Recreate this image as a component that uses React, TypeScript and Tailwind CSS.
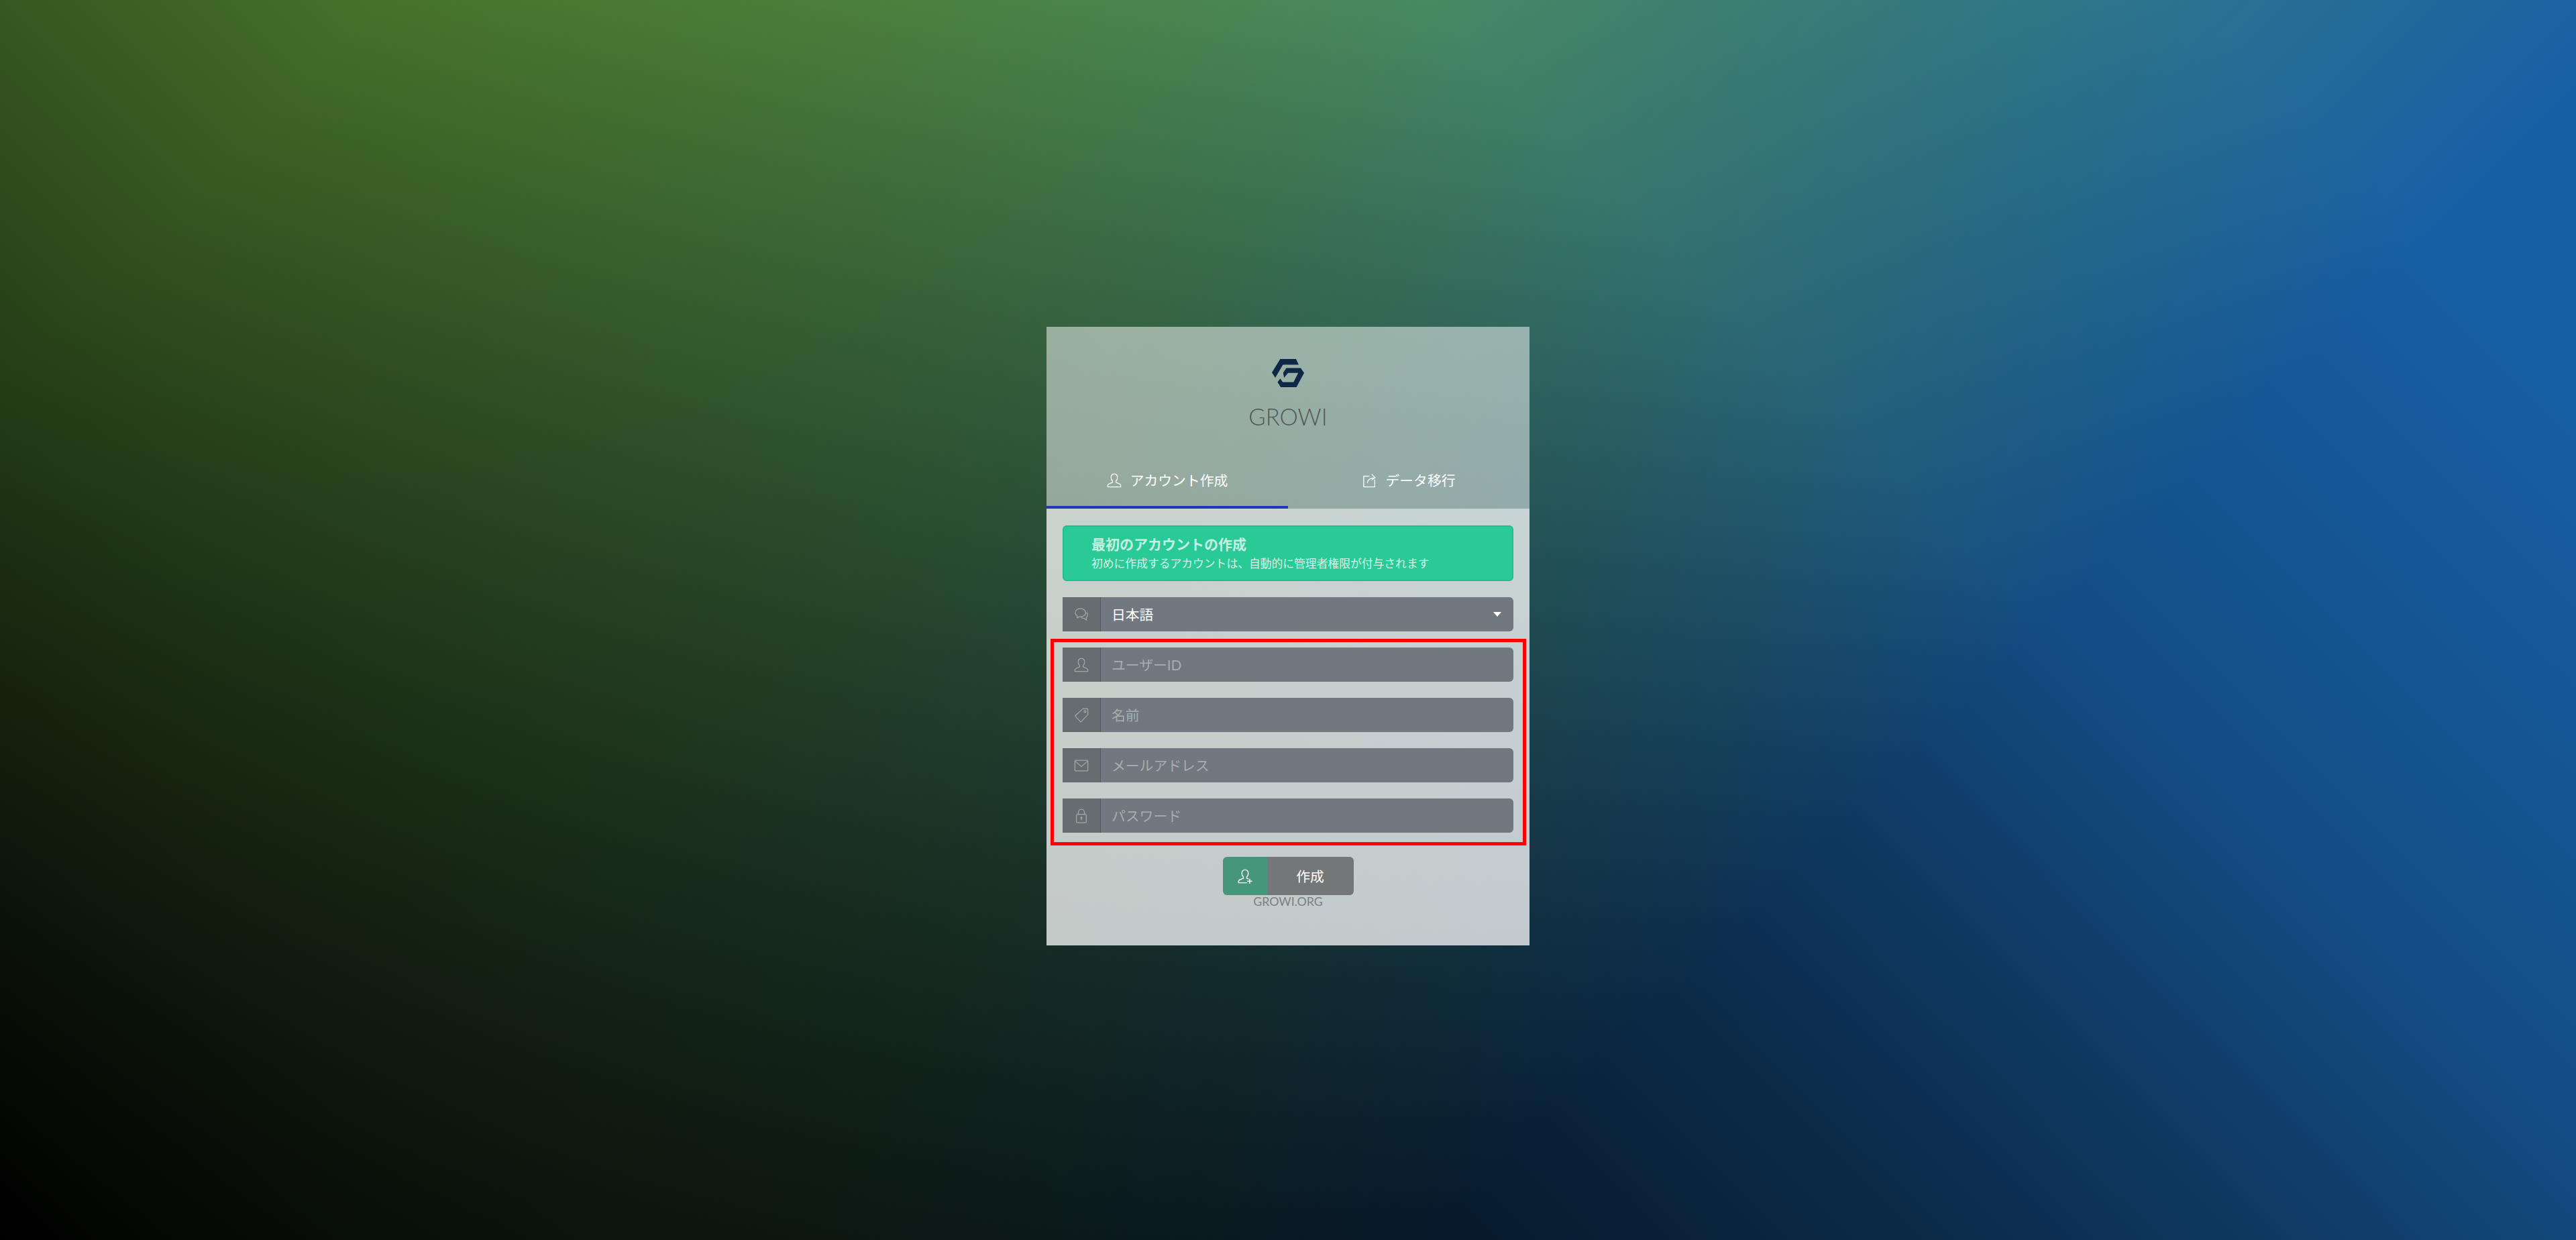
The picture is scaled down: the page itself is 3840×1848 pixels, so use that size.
const fontStack = "font-['Lato','Noto_Sans_CJK_JP',sans-serif]";

const iconProps = {
  width: 22,
  height: 22,
  viewBox: '0 0 24 24',
  fill: 'none',
  stroke: 'currentColor',
  strokeWidth: 1.4,
  strokeLinejoin: 'round' as const,
  strokeLinecap: 'round' as const,
};

const UserPath =
  'M12 1.5c-3.2 0-5.2 2.5-5.2 5.8 0 2.4 1 4.5 2.4 5.6v2.3L2.8 18c-.8.4-1.3 1-1.3 1.8v2.7h21v-2.7c0-.8-.5-1.4-1.3-1.8l-6.4-2.8v-2.3c1.4-1.1 2.4-3.2 2.4-5.6 0-3.3-2-5.8-5.2-5.8z';

function UserIcon() {
  return (
    <svg {...iconProps}>
      <path d={UserPath} />
    </svg>
  );
}

function UserPlusIcon() {
  return (
    <svg {...iconProps} strokeWidth={1.6}>
      <path d="M15 22.5H1.5v-2.7c0-.8.5-1.4 1.3-1.8l6.4-2.8v-2.3c-1.4-1.1-2.4-3.2-2.4-5.6 0-3.3 2-5.8 5.2-5.8s5.2 2.5 5.2 5.8c0 2.4-1 4.5-2.4 5.6v2.3l2.4 1.1" />
      <path d="M19.5 16.5v7M16 20h7" />
    </svg>
  );
}

function ShareIcon() {
  return (
    <svg {...iconProps}>
      <path d="M11 5H2v17.5h18V11" />
      <path d="M8 16c.6-5 4-8 11-8" />
      <path d="M15.5 2.5 20.5 7.5 15.5 11" />
    </svg>
  );
}

function CommentsIcon() {
  return (
    <svg {...iconProps}>
      <path d="M10.5 2C5.8 2 2 5 2 8.8c0 2.2 1.2 4.1 3.2 5.3L5 17.5l3.4-2.3c.7.1 1.4.2 2.1.2 4.7 0 8.5-3 8.5-6.6S15.2 2 10.5 2z" />
      <path d="M20.6 8.8c1 1 1.6 2.3 1.6 3.7 0 1.7-.9 3.2-2.3 4.2l.5 4.3-4-2.9c-2 0-3.8-.6-5-1.6" />
    </svg>
  );
}

function TagIcon() {
  return (
    <svg {...iconProps}>
      <path d="M14.5 1.5h8v9.5L11 23 1.5 13 14.5 1.5z" />
      <circle cx="18" cy="6" r="1.6" />
    </svg>
  );
}

function MailIcon() {
  return (
    <svg {...iconProps}>
      <rect x="1.5" y="3.5" width="21" height="17" rx="1" />
      <path d="m2 5 10 8.5L22 5" />
    </svg>
  );
}

function LockIcon() {
  return (
    <svg {...iconProps}>
      <rect x="4" y="9.5" width="16" height="13.5" rx="1.5" />
      <path d="M7 9.5V6.5C7 3.5 9 1.2 12 1.2s5 2.3 5 5.3v3" />
      <path d="M12 15v3" />
      <circle cx="12" cy="14.8" r=".9" />
    </svg>
  );
}

function GrowiLogo() {
  return (
    <svg width="48" height="42" viewBox="168 75 143 125" fill="#0f2747">
      <polygon points="205,75 275,75 287,100 217,100 183,158 168,135" />
      <polygon points="232,115 296,115 311,137 277,200 207,200 193,178 205,162 216,178 264,178 285,137 240,137 222,158 218,136" />
    </svg>
  );
}

const fields = [
  { placeholder: 'ユーザーID', type: 'text', icon: <UserIcon /> },
  { placeholder: '名前', type: 'text', icon: <TagIcon /> },
  { placeholder: 'メールアドレス', type: 'email', icon: <MailIcon /> },
  { placeholder: 'パスワード', type: 'password', icon: <LockIcon /> },
];

function Addon({ children }: { children: React.ReactNode }) {
  return (
    <div className="w-[57px] shrink-0 flex items-center justify-center bg-[#666d70] border-r border-[#535b62] text-[#a2a8a9]">
      {children}
    </div>
  );
}

export default function App() {
  return (
    <main
      className={`${fontStack} min-h-screen flex justify-center items-start pt-[487px] bg-[linear-gradient(45deg,#000_0%,rgba(0,0,0,0)_70%),linear-gradient(135deg,#74bc46_10%,rgba(116,188,70,0)_70%),linear-gradient(225deg,#175fa5_10%,rgba(23,95,165,0)_80%),linear-gradient(#0a1f33,#0a1f33)]`}
    >
      <div className="w-[720px] h-[922px] flex flex-col">
        <div className="h-[271px] bg-white/50 flex flex-col items-center">
          <div className="mt-[48px]">
            <GrowiLogo />
          </div>
          <h1 className="mt-[22px] text-[34.5px] leading-[44px] font-light text-[#525857]">GROWI</h1>
          <div className="mt-auto w-full flex">
            <button className="flex-1 h-[82px] pt-[2px] border-b-4 border-[#1f36b8] flex items-center justify-center gap-[13px] text-white text-[20.8px]">
              <UserIcon />
              アカウント作成
            </button>
            <button className="flex-1 h-[82px] pt-[2px] border-b-4 border-transparent flex items-center justify-center gap-[13px] text-white text-[20.8px]">
              <ShareIcon />
              データ移行
            </button>
          </div>
        </div>

        <div className="flex-1 bg-white/75 px-[24px] pt-[25px] flex flex-col">
          <div className="h-[83px] rounded-md border-2 border-[#22bd8e] bg-[#2aca97] pl-[41px] flex flex-col justify-center">
            <div className="text-[21px] leading-[28px] mb-[2px] font-bold text-[#c5f0e1]">最初のアカウントの作成</div>
            <div className="text-[16.8px] leading-[26px] text-[#d6f3e9]">
              初めに作成するアカウントは、自動的に管理者権限が付与されます
            </div>
          </div>

          <div className="mt-[24px] h-[51px] flex rounded-r-md overflow-hidden">
            <Addon>
              <CommentsIcon />
            </Addon>
            <button className="flex-1 flex items-center justify-between pl-[16px] pr-[18px] bg-[#717880] text-white text-[20.8px]">
              日本語
              <svg width="12" height="7" viewBox="0 0 12 7" fill="currentColor">
                <polygon points="0,0 12,0 6,7" />
              </svg>
            </button>
          </div>

          <div className="mt-[11px] ml-[-18px] mr-[-19px] h-[308px] border-[5px] border-[#ff0000] pt-[8px] pl-[13px] pr-[14px] flex flex-col gap-[24px]">
            {fields.map((field) => (
              <div key={field.placeholder} className="h-[51px] shrink-0 flex rounded-r-md overflow-hidden">
                <Addon>{field.icon}</Addon>
                <input
                  type={field.type}
                  placeholder={field.placeholder}
                  className="flex-1 min-w-0 bg-[#717880] pl-[16px] text-[20.8px] text-white outline-none placeholder:text-[#a8adae]"
                />
              </div>
            ))}
          </div>

          <button className="mt-[17px] self-center w-[195px] h-[57px] flex rounded-md overflow-hidden text-white">
            <span className="w-[66px] h-full flex items-center justify-center bg-[#45967a]">
              <UserPlusIcon />
            </span>
            <span className="flex-1 h-full flex items-center justify-center bg-[#747778] text-[20.8px]">作成</span>
          </button>
          <div className="text-center text-[17.8px] leading-[18px] text-[#7b7f80]">GROWI.ORG</div>
        </div>
      </div>
    </main>
  );
}
